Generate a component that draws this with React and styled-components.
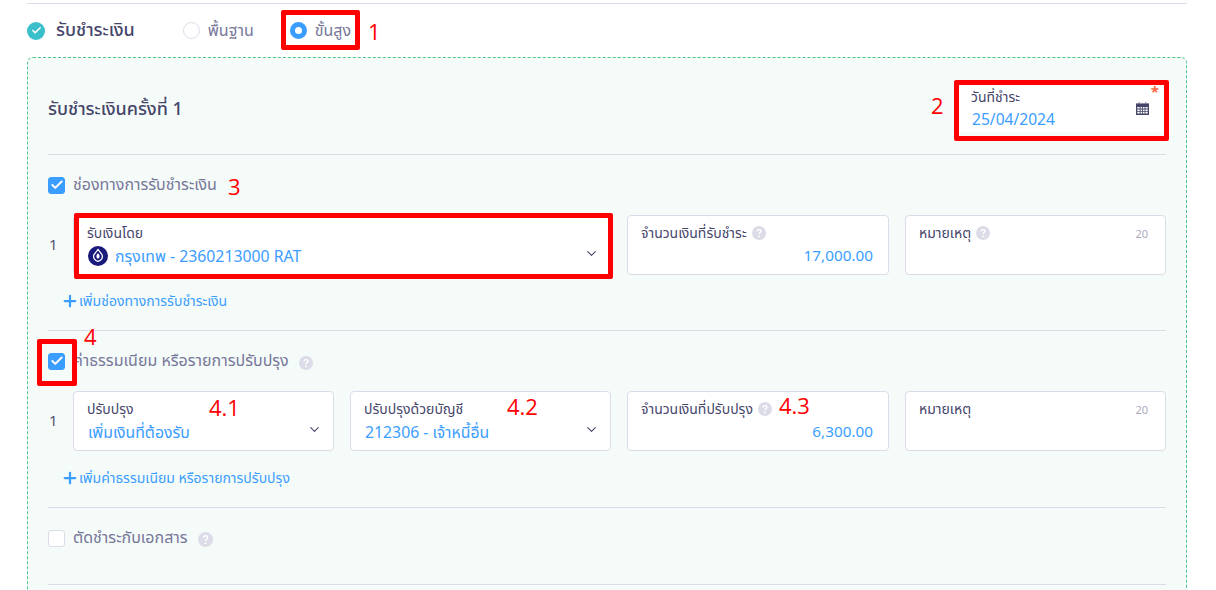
import React from "react";
import styled, { createGlobalStyle } from "styled-components";
import { Check, ChevronDown, Plus } from "lucide-react";

const GlobalStyle = createGlobalStyle`
  html, body { margin: 0; padding: 0; background: #fff; }
  body { font-family: "Noto Sans", "Noto Sans Thai", "Open Sans", "DejaVu Sans", sans-serif; color: #4a4a6a; }
`;

function Help({ size = 14 }) {
  return (
    <HelpIcon width={size} height={size} viewBox="0 0 14 14">
      <circle cx="7" cy="7" r="7" fill="#dcdce8" />
      <path d="M5.1 5.4c0-1.1.8-1.8 1.9-1.8s1.9.7 1.9 1.7c0 1.5-1.9 1.5-1.9 3" fill="none" stroke="#fff" strokeWidth="1.4" />
      <circle cx="7" cy="10.4" r=".95" fill="#fff" />
    </HelpIcon>
  );
}

function CalendarIcon() {
  return (
    <svg width="13" height="13" viewBox="0 0 13 13">
      <path d="M2.6 0h1.2v1.4H2.6zM9.2 0h1.2v1.4H9.2z" fill="#9a9ab4" />
      <path d="M0 1.4h13V13H0z" fill="#45456a" />
      <path d="M1.3 5h2.4v1.6H1.3zM4.6 5h1.6v1.6H4.6zM7 5h1.6v1.6H7zM9.4 5h2.3v1.6H9.4zM1.3 7.4h2.4V9H1.3zM4.6 7.4h1.6V9H4.6zM7 7.4h1.6V9H7zM9.4 7.4h2.3V9H9.4zM1.3 9.8h2.4v1.6H1.3zM4.6 9.8h1.6v1.6H4.6zM7 9.8h1.6v1.6H7zM9.4 9.8h2.3v1.6H9.4z" fill="#fff" />
    </svg>
  );
}

function BankLogo() {
  return (
    <svg width="20" height="20" viewBox="0 0 20 20" style={{ flexShrink: 0 }}>
      <circle cx="10" cy="10" r="10" fill="#1a1a7c" />
      <path d="M10 3.4l4.1 5.4c1.1 2.9-.9 5.6-4.1 6.6-3.2-1-5.2-3.7-4.1-6.6z" fill="none" stroke="#fff" strokeWidth="1.2" />
      <path d="M10 7.2c1 1 1.6 2 1.6 3.1 0 1.1-.7 2-1.6 2.6-.9-.6-1.6-1.5-1.6-2.6 0-1.1.6-2.1 1.6-3.1z" fill="#fff" />
    </svg>
  );
}

function SelectField({ label, value, logo }) {
  return (
    <Field>
      <FieldLabel>{label}</FieldLabel>
      <SelectValue>
        {logo && <BankLogo />}
        <span>{value}</span>
      </SelectValue>
      <Chevron size={15} strokeWidth={1.8} />
    </Field>
  );
}

function AmountField({ label, value }) {
  return (
    <Field>
      <FieldLabel>
        {label} <Help />
      </FieldLabel>
      <AmountValue>{value}</AmountValue>
    </Field>
  );
}

function NoteField({ help }) {
  return (
    <Field>
      <NoteHead>
        <FieldLabel>
          หมายเหตุ {help && <Help />}
        </FieldLabel>
        <Counter>20</Counter>
      </NoteHead>
    </Field>
  );
}

export default function App() {
  return (
    <Page>
      <GlobalStyle />
      <StatusRow>
        <StatusTick>
          <Check size={11} strokeWidth={3.5} color="#fff" />
        </StatusTick>
        <StatusTitle>รับชำระเงิน</StatusTitle>
        <RadioItem>
          <Radio />
          พื้นฐาน
        </RadioItem>
        <RadioItem>
          <Radio $on />
          ขั้นสูง
        </RadioItem>
      </StatusRow>

      <Panel>
        <TitleRow>
          <PanelTitle>รับชำระเงินครั้งที่ 1</PanelTitle>
          <DateField>
            <FieldLabel>วันที่ชำระ</FieldLabel>
            <DateValue>25/04/2024</DateValue>
            <Required>*</Required>
            <DateIcon>
              <CalendarIcon />
            </DateIcon>
          </DateField>
        </TitleRow>

        <Section $height={176}>
          <CheckRow>
            <CheckBox $on>
              <Check size={14} strokeWidth={3.4} color="#fff" />
            </CheckBox>
            <CheckLabel>ช่องทางการรับชำระเงิน</CheckLabel>
          </CheckRow>
          <FieldRow>
            <RowNumber>1</RowNumber>
            <FieldGrid>
              <WideCell>
                <SelectField label="รับเงินโดย" value="กรุงเทพ - 2360213000 RAT" logo />
              </WideCell>
              <AmountField label="จำนวนเงินที่รับชำระ" value="17,000.00" />
              <NoteField help />
            </FieldGrid>
          </FieldRow>
          <AddLink>
            <Plus size={18} strokeWidth={3} />
            เพิ่มช่องทางการรับชำระเงิน
          </AddLink>
        </Section>

        <Section $height={177}>
          <CheckRow>
            <CheckBox $on>
              <Check size={14} strokeWidth={3.4} color="#fff" />
            </CheckBox>
            <CheckLabel>ค่าธรรมเนียม หรือรายการปรับปรุง</CheckLabel>
            <Help />
          </CheckRow>
          <FieldRow>
            <RowNumber>1</RowNumber>
            <FieldGrid>
              <SelectField label="ปรับปรุง" value="เพิ่มเงินที่ต้องรับ" />
              <SelectField label="ปรับปรุงด้วยบัญชี" value="212306 - เจ้าหนี้อื่น" />
              <AmountField label="จำนวนเงินที่ปรับปรุง" value="6,300.00" />
              <NoteField />
            </FieldGrid>
          </FieldRow>
          <AddLink $top={17}>
            <Plus size={18} strokeWidth={3} />
            เพิ่มค่าธรรมเนียม หรือรายการปรับปรุง
          </AddLink>
        </Section>

        <Section $height={77}>
          <CheckRow>
            <CheckBox />
            <CheckLabel>ตัดชำระกับเอกสาร</CheckLabel>
            <Help size={15} />
          </CheckRow>
        </Section>
      </Panel>

      <Mark style={{ left: 281, top: 10, width: 69, height: 30 }} />
      <Mark style={{ left: 954, top: 80, width: 205, height: 51 }} />
      <Mark style={{ left: 74, top: 213, width: 529, height: 56 }} />
      <Mark style={{ left: 37, top: 339, width: 30, height: 37 }} />

      <Note style={{ left: 368, top: 16 }}>1</Note>
      <Note style={{ left: 931, top: 90 }}>2</Note>
      <Note style={{ left: 228, top: 171 }}>3</Note>
      <Note style={{ left: 84, top: 321 }}>4</Note>
      <Note style={{ left: 209, top: 392 }}>4.1</Note>
      <Note style={{ left: 507, top: 391 }}>4.2</Note>
      <Note style={{ left: 779, top: 390 }}>4.3</Note>
    </Page>
  );
}

const Page = styled.div`
  position: relative;
  box-sizing: border-box;
  width: 1216px;
  height: 590px;
  padding: 3px 29px 0 27px;
  overflow: hidden;
`;

const StatusRow = styled.div`
  display: flex;
  align-items: center;
  height: 53px;
  border-top: 1px solid #dcdce8;
  box-sizing: content-box;
`;

const StatusTick = styled.span`
  display: flex;
  align-items: center;
  justify-content: center;
  width: 18px;
  height: 18px;
  border-radius: 50%;
  background: #3bbfcb;
`;

const StatusTitle = styled.span`
  margin: 0 48px 0 11px;
  font-size: 18px;
  font-weight: 500;
  color: #45456a;
`;

const RadioItem = styled.span`
  display: flex;
  align-items: center;
  gap: 8px;
  margin-right: 36px;
  font-size: 16px;
  color: #77779a;
`;

const Radio = styled.span`
  box-sizing: border-box;
  width: 17px;
  height: 17px;
  border-radius: 50%;
  background: #fff;
  border: ${(p) => (p.$on ? "5px solid #3b9dff" : "1px solid #dcdce8")};
`;

const Panel = styled.div`
  box-sizing: border-box;
  height: 560px;
  padding: 0 20px;
  background: #f5fbf8;
  border: 1px dashed #4fc38a;
  border-radius: 6px;
`;

const TitleRow = styled.div`
  display: flex;
  align-items: center;
  justify-content: space-between;
  height: 96px;
  border-bottom: 1px solid #dcdce8;
  padding-right: 2px;
`;

const PanelTitle = styled.div`
  margin-top: 7px;
  font-size: 18px;
  font-weight: 500;
  color: #45456a;
`;

const DateField = styled.div`
  position: relative;
  box-sizing: border-box;
  width: 205px;
  height: 51px;
  padding: 7px 12px;
  background: #fff;
`;

const DateValue = styled.div`
  margin-top: 3px;
  margin-left: 1px;
  font-size: 15.6px;
  line-height: 20px;
  color: #3b9dff;
`;

const Required = styled.span`
  position: absolute;
  top: 1px;
  right: 5px;
  font-size: 15px;
  font-weight: 700;
  line-height: 18px;
  color: #ff6b4a;
`;

const DateIcon = styled.span`
  position: absolute;
  top: 21px;
  right: 15px;
  line-height: 0;
`;

const Section = styled.div`
  box-sizing: border-box;
  height: ${(p) => p.$height}px;
  padding-top: 21px;
  border-bottom: 1px solid #dcdce8;
`;

const CheckRow = styled.div`
  display: flex;
  align-items: center;
  height: 18px;

  & > svg {
    margin-top: 3px;
  }
`;

const CheckBox = styled.span`
  display: flex;
  align-items: center;
  justify-content: center;
  box-sizing: border-box;
  width: 17px;
  height: 17px;
  border-radius: 3px;
  background: ${(p) => (p.$on ? "#3b9dff" : "#fff")};
  border: 1px solid ${(p) => (p.$on ? "#3b9dff" : "#dcdce8")};
`;

const CheckLabel = styled.span`
  margin: 0 10px 0 8px;
  font-size: 16px;
  color: #77779a;
`;

const FieldRow = styled.div`
  display: flex;
  align-items: center;
  margin-top: 21px;
`;

const RowNumber = styled.span`
  width: 25px;
  margin-bottom: 3px;
  padding-left: 1px;
  box-sizing: border-box;
  font-size: 15px;
  color: #55556f;
`;

const FieldGrid = styled.div`
  flex: 1;
  display: grid;
  grid-template-columns: 261px 261px 262px 261px;
  gap: 16px;
`;

const WideCell = styled.div`
  grid-column: span 2;
`;

const Field = styled.div`
  position: relative;
  box-sizing: border-box;
  height: 60px;
  padding: 8px 13px;
  background: #fff;
  border: 1px solid #dcdce8;
  border-radius: 4px;
`;

const FieldLabel = styled.div`
  display: flex;
  align-items: center;
  gap: 5px;
  font-size: 14px;
  line-height: 18px;
  color: #45456a;
`;

const SelectValue = styled.div`
  display: flex;
  align-items: center;
  gap: 7px;
  margin-top: 3px;
  padding-left: 1px;
  font-size: 15.8px;
  line-height: 22px;
  color: #3b9dff;
`;

const Chevron = styled(ChevronDown)`
  position: absolute;
  top: 30px;
  right: 11px;
  color: #45456a;
`;

const AmountValue = styled.div`
  margin-top: 2px;
  padding-right: 2px;
  text-align: right;
  font-size: 15.3px;
  line-height: 22px;
  color: #3b9dff;
`;

const NoteHead = styled.div`
  display: flex;
  justify-content: space-between;
  align-items: center;
  padding-right: 4px;
`;

const Counter = styled.span`
  font-size: 11px;
  color: #a9a9be;
`;

const HelpIcon = styled.svg`
  flex-shrink: 0;
`;

const AddLink = styled.div`
  display: flex;
  align-items: center;
  margin: ${(p) => p.$top || 16}px 0 0 13px;
  font-size: 14px;
  line-height: 20px;
  color: #3b9dff;
`;

const Mark = styled.div`
  position: absolute;
  box-sizing: content-box;
  border: 5px solid #ff0000;
  border-radius: 2px;
`;

const Note = styled.span`
  position: absolute;
  font-family: "Open Sans", "Noto Sans", sans-serif;
  font-size: 22px;
  line-height: 30px;
  color: #ff0000;
`;
